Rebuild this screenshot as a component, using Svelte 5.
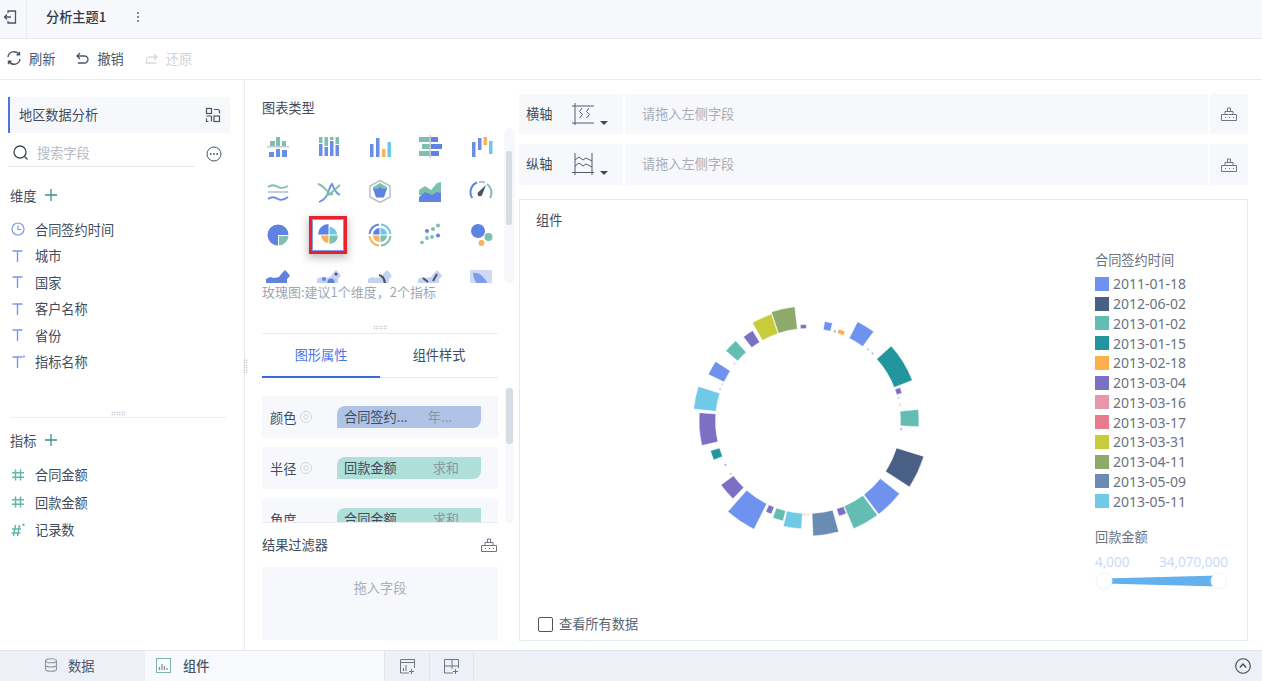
<script>
  const C = 808 - 688, CY = 120, R0 = 92.5;
  const pt = (a, r) => {
    const t = (a * Math.PI) / 180;
    return [(C + r * Math.sin(t)).toFixed(2), (CY - r * Math.cos(t)).toFixed(2)];
  };
  const arc = (a, b, R) => {
    const [x1, y1] = pt(a, R0), [x2, y2] = pt(b, R0), [x3, y3] = pt(b, R), [x4, y4] = pt(a, R);
    return `M${x1} ${y1}A${R0} ${R0} 0 0 1 ${x2} ${y2}L${x3} ${y3}A${R} ${R} 0 0 0 ${x4} ${y4}Z`;
  };
  const col = {
    blue: '#6f92ee', dark: '#4a5f85', teal: '#64bdb2', deep: '#23959e', orange: '#fbb04c', purple: '#7b70c4',
    pink: '#e797ac', rose: '#e87c8c', yellow: '#c8cb3a', olive: '#8daa6c', steel: '#6b8cb2', cyan: '#6ecae6'
  };
  const segs = [
    [-18.6, -6.6, 115, col.olive], [-29.5, -18.9, 113, col.yellow], [-37.5, -31.5, 106, col.purple],
    [-49.5, -42, 108, col.teal], [-65, -57.2, 110, col.blue], [-84, -72.5, 115, col.cyan],
    [-103, -85.6, 109, col.purple], [-112.5, -107, 102, col.deep], [-136, -126.3, 108, col.purple],
    [-153.5, -138.5, 121, col.blue], [-158.5, -155, 100, col.purple], [-166, -160, 103, col.teal],
    [-176.5, -166.8, 108, col.cyan], [164.5, 177.5, 115, col.steel], [157.5, 162, 100, col.purple],
    [143.6, 157, 117, col.teal], [128.5, 142.8, 117, col.blue], [107, 123, 121, col.dark],
    [84, 93, 111, col.teal], [48, 68.7, 112, col.deep], [26.5, 36.3, 111, col.blue],
    [18.5, 22.5, 97, col.orange], [9.5, 14, 101, col.blue], [-4.6, -1, 96.5, col.purple], [70, 73.5, 98, col.purple]
  ];
  const dots = [
    [-52, col.pink], [-67, col.yellow], [-70, col.pink], [-118, col.deep], [-124.4, col.olive], [-177.8, col.pink],
    [180, col.orange], [40, col.teal], [43.7, col.purple], [75.7, col.cyan], [80, col.orange], [95, col.purple], [16.7, col.dark]
  ];
  const chartSegs = segs.map(([a, b, r, c]) => ({ d: arc(a, b, r), c }));
  const chartDots = dots.map(([a, c]) => ({ d: arc(a - 0.7, a + 0.7, 94.5), c }));
  const legend = [
    ['2011-01-18', col.blue], ['2012-06-02', col.dark], ['2013-01-02', col.teal], ['2013-01-15', col.deep],
    ['2013-02-18', col.orange], ['2013-03-04', col.purple], ['2013-03-16', col.pink], ['2013-03-17', col.rose],
    ['2013-03-31', col.yellow], ['2013-04-11', col.olive], ['2013-05-09', col.steel], ['2013-05-11', col.cyan]
  ];
  const dims = [
    ['clock', '合同签约时间'], ['t', '城市'], ['t', '国家'], ['t', '客户名称'], ['t', '省份'], ['tc', '指标名称']
  ];
  const measures = [['h', '合同金额'], ['h', '回款金额'], ['hc', '记录数']];
  const mapPath = 'M0 11l4-2 4 1 5-1 3-4 3-3 3 3 2 3-3 3V24H0z';
</script>

<div class="app">
  <header class="top">
    <div class="back">
      <svg width="16" height="16" viewBox="0 0 16 16" fill="none" stroke="#4a5568" stroke-width="1.300"><path d="M6 4V2h7.500v12H6v-2M9 8H2.500M5 5.500 2.500 8 5 10.500"/></svg>
    </div>
    <div class="topic">分析主题1</div>
    <svg class="more" width="4" height="12" viewBox="0 0 4 12" fill="#5a6474"><circle cx="2" cy="2" r="1"/><circle cx="2" cy="6" r="1"/><circle cx="2" cy="10" r="1"/></svg>
  </header>

  <div class="tools">
    <span class="tool">
      <svg width="16" height="16" viewBox="0 0 16 16" fill="none" stroke="#4a5568" stroke-width="1.400"><path d="M2 7A6 6 0 0 1 13 4.500M14 9A6 6 0 0 1 3 11.500M13.500 1.800v3h-3M2.500 14.200v-3h3"/></svg>
      刷新
    </span>
    <span class="tool undo">
      <svg width="15" height="15" viewBox="0 0 15 15" fill="none" stroke="#4a5568" stroke-width="1.300"><path d="M5 2 2 5l3 3M2 5h7.500a3.500 3.500 0 0 1 0 7H3"/></svg>
      撤销
    </span>
    <span class="tool off">
      <svg width="15" height="15" viewBox="0 0 15 15" fill="none" stroke="#d5d9e0" stroke-width="1.300"><path d="m10 3 3 3-3 3M13 6H6a3.500 3.500 0 0 0-3.500 3.500V12h10"/></svg>
      还原
    </span>
  </div>

  <main class="main">
    <aside class="left">
      <div class="ds">
        <span>地区数据分析</span>
        <svg width="16" height="16" viewBox="0 0 16 16" fill="none" stroke="#4a5568" stroke-width="1.200"><rect x="1.500" y="1.500" width="5" height="5"/><rect x="9" y="9" width="5.500" height="5.500"/><path d="M1.500 9h5M6.500 9v5.500M1.500 11.500v3h2M9 2.500h3.500a2 2 0 0 1 2 2V6.500"/></svg>
      </div>
      <div class="searchrow">
        <div class="search">
          <svg width="17" height="17" viewBox="0 0 17 17" fill="none" stroke="#3d4a5c" stroke-width="1.300"><circle cx="8" cy="8" r="6"/><path d="m12.500 12.500 3 3"/></svg>
          <span>搜索字段</span>
        </div>
        <svg class="opts" width="16" height="16" viewBox="0 0 16 16" fill="none" stroke="#4a5568"><circle cx="8" cy="8" r="7"/><g fill="#4a5568" stroke="none"><circle cx="4.800" cy="8" r=".9"/><circle cx="8" cy="8" r=".9"/><circle cx="11.200" cy="8" r=".9"/></g></svg>
      </div>
      <div class="head">维度
        <svg width="12" height="12" viewBox="0 0 12 12" stroke="#3f8f88" stroke-width="1.300"><path d="M6 0v12M0 6h12"/></svg>
      </div>
      <ul class="fields">
        {#each dims as [kind, name]}
          <li>
            {#if kind === 'clock'}
              <svg width="14" height="14" viewBox="0 0 14 14" fill="none" stroke="#7b97e6" stroke-width="1.200"><circle cx="7" cy="7" r="6"/><path d="M7 3.500V7.500H10"/></svg>
            {:else}
              <svg width="14" height="14" viewBox="0 0 14 14" fill="none" stroke="#7b97e6" stroke-width="1.400"><path d="M1.500 2h10M6.500 2v11"/>{#if kind === 'tc'}<circle cx="13" cy="1.500" r="1" fill="#7b97e6" stroke="none"/>{/if}</svg>
            {/if}
            <span>{name}</span>
          </li>
        {/each}
      </ul>
      <div class="grip lgrip"></div>
      <div class="rule"></div>
      <div class="head mhead">指标
        <svg width="12" height="12" viewBox="0 0 12 12" stroke="#3f8f88" stroke-width="1.300"><path d="M6 0v12M0 6h12"/></svg>
      </div>
      <ul class="fields mfields">
        {#each measures as [kind, name]}
          <li>
            <svg width="14" height="14" viewBox="0 0 14 14" fill="none" stroke="#63b8ac" stroke-width="1.500">
              {#if kind === 'h'}
                <path d="M4.500 1.500v11M9.500 1.500v11M1 4.700h12M1 9.300h12"/>
              {:else}
                <path d="M4.500 2 2.500 13M8.500 2l-2 11M1 6h9M.5 10h9"/><circle cx="12.500" cy="1.800" r="1.200" fill="#63b8ac" stroke="none"/>
              {/if}
            </svg>
            <span>{name}</span>
          </li>
        {/each}
      </ul>
      <div class="vgrip"></div>
    </aside>

    <section class="mid">
      <div class="title">图表类型</div>
      <div class="types">
        <div class="grid">
          <div class="ic"><svg viewBox="0 0 24 24"><path fill="#7cc0b0" d="M4 7h5v5H4zM10 3h4v9h-4zM16 7h4v5h-4z"/><path fill="#c6ccd8" d="M1 12h22v1.500H1z"/><path fill="#6a8ee8" d="M3 18h5v5H3zM10 15h4v8h-4zM16 16h5v7h-5z"/></svg></div>
          <div class="ic"><svg viewBox="0 0 24 24"><path fill="#7cc0b0" d="M2 3h3.500v6H2zM7.500 3H11v9H7.500zM13 3h3.500v3H13zM18.500 3H22v7h-3.500z"/><path fill="#6a8ee8" d="M2 10h3.500v12H2zM7.500 13H11v9H7.500zM13 7h3.500v15H13zM18.500 11H22v11h-3.500z"/></svg></div>
          <div class="ic"><svg viewBox="0 0 24 24"><path fill="#6a8ee8" d="M2 10h3.500v13H2zM8 4h3.500v19H8z"/><path fill="#f5b45c" d="M14 15h3.500v8H14z"/><path fill="#6cc7e8" d="M19.500 8H23v15h-3.500z"/></svg></div>
          <div class="ic"><svg viewBox="0 0 24 24"><path fill="#7cc0b0" d="M1 3h11v5H1zM1 17h11v5H1zM4 10h8v5H4z"/><path fill="#c6ccd8" d="M11.500 1H13v23h-1.500z"/><path fill="#5f82e3" d="M13 3h7v5h-7zM13 10h11v5H13zM13 17h8v5h-8z"/></svg></div>
          <div class="ic"><svg viewBox="0 0 24 24"><path fill="#6a8ee8" d="M3 8h3.500v15H3zM9 4h3.500v12H9z"/><path fill="#f5b45c" d="M14.500 3H18v8h-3.500z"/><path fill="#6cc7e8" d="M20 7h3.500v13H20z"/></svg></div>

          <div class="ic"><svg viewBox="0 0 24 24" fill="none" stroke-width="1.800"><path stroke="#7cc0b0" d="M2 8c4-3 7-2 10 0s6 1 10-1"/><path stroke="#c6ccd8" stroke-width="2" d="M2 13h20"/><path stroke="#6a8ee8" d="M2 20c4-3 7-2 10 0s6 1 10-2"/></svg></div>
          <div class="ic"><svg viewBox="0 0 24 24" fill="none" stroke-width="1.800"><path stroke="#6a8ee8" d="M2 23c6-2 8-6 10-12 1-3 2-5 3-6 2 4 3 9 8 11"/><path stroke="#7cc0b0" d="M1 5c5 1 9 7 12 10l10-9M9 16l7-1"/></svg></div>
          <div class="ic"><svg viewBox="0 0 24 24"><path fill="none" stroke="#b9bfcb" stroke-width="1.500" d="M12 1.500 22 7v11l-10 5.500L2 18V7z"/><path fill="#7cc0b0" d="M5 8l7-4 7 4v3H5z"/><path fill="#5f82e3" d="M5 9.500l4 .5 3-2 3 2 4-.5-3 9H8z"/></svg></div>
          <div class="ic"><svg viewBox="0 0 24 24"><path fill="#7cc0b0" d="M1 11l6-4 6 4 6-7 4-1v13H1z"/><path fill="#5f82e3" d="M1 18l6-5 7 3 5-3 4 1v9H1z"/></svg></div>
          <div class="ic"><svg viewBox="0 0 24 24" fill="none" stroke-width="2"><path stroke="#5f82e3" d="M3.200 19A10.500 10.500 0 0 1 8 3.500"/><path stroke="#b9bfcb" d="M10 3a10 10 0 0 1 6 .5"/><path stroke="#7cc0b0" d="M18 5a10.500 10.500 0 0 1 3 14"/><path fill="#4a5568" stroke="none" d="M17 6 13.500 15a2.500 2.500 0 1 1-3.500-2.500z"/></svg></div>

          <div class="ic"><svg viewBox="0 0 24 24"><path fill="#5f82e3" d="M12 1.500A10.500 10.500 0 1 1 1.500 12 10.500 10.500 0 0 1 12 1.500z M12 12v10.500A10.500 10.500 0 0 0 22.500 12z" fill-rule="evenodd"/><path fill="#7cc0b0" d="M13 13h9.500A10.500 10.500 0 0 1 13 22.500z"/></svg></div>
          <div class="ic sel"><svg viewBox="0 0 24 24"><path fill="#5f82e3" d="M11.500 11.500H1A10.500 10.500 0 0 1 11.500 1z"/><path fill="#6cc7e8" d="M12.500 11.500V4a7.500 7.500 0 0 1 7.500 7.500z"/><path fill="#7cc0b0" d="M12.500 12.500h8.500a8.500 8.500 0 0 1-8.500 8.500z"/><path fill="#f5b45c" d="M11.500 12.500v7.500A7.500 7.500 0 0 1 4 12.500z"/></svg></div>
          <div class="ic"><svg viewBox="0 0 24 24" fill="none"><path fill="#5f82e3" d="M11.500 11.500H5A6.500 6.500 0 0 1 11.500 5z"/><path fill="#6cc7e8" d="M12.500 11.500V5A6.500 6.500 0 0 1 19 11.500z"/><path fill="#7cc0b0" d="M12.500 12.500H19A6.500 6.500 0 0 1 12.500 19z"/><path fill="#f5b45c" d="M11.500 12.500V19A6.500 6.500 0 0 1 5 12.500z"/><g stroke-width="2"><path stroke="#5f82e3" d="M1.500 11A10.500 10.500 0 0 1 11 1.500"/><path stroke="#6cc7e8" d="M13 1.500a10.500 10.500 0 0 1 9.500 9.500"/><path stroke="#7cc0b0" d="M22.500 13a10.500 10.500 0 0 1-9.500 9.500"/><path stroke="#f5b45c" d="M11 22.500A10.500 10.500 0 0 1 1.500 13"/></g></svg></div>
          <div class="ic"><svg viewBox="0 0 24 24"><circle cx="4" cy="19.500" r="1.800" fill="#7cc0b0"/><circle cx="9" cy="15" r="1.900" fill="#7cc0b0"/><circle cx="14" cy="14" r="1.900" fill="#7cc0b0"/><circle cx="9" cy="8" r="2" fill="#5f82e3"/><circle cx="15" cy="6" r="2" fill="#7cc0b0"/><circle cx="20" cy="2.500" r="2" fill="#7cc0b0"/><circle cx="20" cy="12.500" r="2" fill="#5f82e3"/></svg></div>
          <div class="ic"><svg viewBox="0 0 24 24"><circle cx="9" cy="8" r="7" fill="#5f82e3"/><circle cx="19.500" cy="14" r="4" fill="#7cc0b0"/><circle cx="12.500" cy="20" r="3" fill="#f5b45c"/></svg></div>

          <div class="ic"><svg viewBox="0 0 24 24"><path fill="#5f82e3" d={mapPath}/></svg></div>
          <div class="ic"><svg viewBox="0 0 24 24"><path fill="#c5d2f4" d={mapPath}/><circle cx="7" cy="11" r="2" fill="#5f82e3"/><circle cx="14" cy="14" r="3.500" fill="#5f82e3"/><circle cx="19" cy="6" r="1.500" fill="#4a5568"/></svg></div>
          <div class="ic"><svg viewBox="0 0 24 24"><path fill="#c5d2f4" d={mapPath}/><path fill="none" stroke="#4a5568" stroke-width="2.200" d="M11 7c4 1 6 5 6 10"/></svg></div>
          <div class="ic"><svg viewBox="0 0 24 24"><path fill="#c5d2f4" d={mapPath}/><path fill="none" stroke="#4a5568" stroke-width="2" d="M5 10l5 4M15 13l4-7"/></svg></div>
          <div class="ic"><svg viewBox="0 0 24 24"><rect x="1" y="2" width="22" height="22" fill="#cfdaf6"/><path fill="#7f9cea" d="M4 5c6-1 10 3 14 9v6h-4C9 19 4 11 4 5z"/></svg></div>
        </div>
        <div class="bar"><i class="thumb t1"></i></div>
      </div>
      <div class="hint">玫瑰图:建议1个维度，2个指标</div>
      <div class="sep"><div class="grip"></div></div>
      <div class="tabs">
        <div class="tab active">图形属性</div>
        <div class="tab other">组件样式</div>
      </div>
      <div class="props">
        <div class="plist">
          <div class="prow"><span class="pl">颜色</span><svg class="gear" width="12" height="12" viewBox="0 0 12 12" fill="none" stroke="#d3d6dd"><circle cx="6" cy="6" r="5.500"/><circle cx="6" cy="6" r="2.200"/></svg>
            <div class="pill blue"><span>合同签约...</span><em class="e1">年...</em></div></div>
          <div class="prow"><span class="pl">半径</span><svg class="gear" width="12" height="12" viewBox="0 0 12 12" fill="none" stroke="#d3d6dd"><circle cx="6" cy="6" r="5.500"/><circle cx="6" cy="6" r="2.200"/></svg>
            <div class="pill green"><span>回款金额</span><em>求和</em></div></div>
          <div class="prow"><span class="pl">角度</span>
            <div class="pill green nogear"><span>合同金额</span><em>求和</em></div></div>
        </div>
        <div class="bar pbar"><i class="thumb t2"></i></div>
      </div>
      <div class="ftitle">
        <span>结果过滤器</span>
        <svg width="18" height="16" viewBox="0 0 18 16" fill="none" stroke="#6d7684"><path d="M1.500 8.500h15v6h-15zM5 8.500v-3h8v3M7.500 5.500V2h3v3.500M5 11.500h1M9 11.500h1M13 11.500h1"/></svg>
      </div>
      <div class="fbox">拖入字段</div>
    </section>

    <section class="right">
      <div class="axis">
        <div class="cell name"><span>横轴</span>
          <svg width="24" height="24" viewBox="0 0 24 24" fill="none" stroke="#4f5c6e"><path d="M0 22h22M0 5h22M3 2v22"/><path d="M10 7 7.500 10.500l3 3-3 3.500M17 7l-2.500 3.500 3 3-3 3.500"/></svg>
          <i class="caret"></i>
        </div>
        <div class="cell drop">请拖入左侧字段</div>
        <div class="cell tool2"><svg width="18" height="16" viewBox="0 0 18 16" fill="none" stroke="#6d7684"><path d="M1.500 8.500h15v6h-15zM5 8.500v-3h8v3M7.500 5.500V2h3v3.500M5 11.500h1M9 11.500h1M13 11.500h1"/></svg></div>
      </div>
      <div class="axis a2">
        <div class="cell name"><span>纵轴</span>
          <svg width="24" height="24" viewBox="0 0 24 24" fill="none" stroke="#4f5c6e"><path d="M3 1v22M0 20.500h22M20 1v22"/><path d="m3 8 4-3 4 3 3-2 6 3M3 14l4-3 4 3 3-2 6 3"/></svg>
          <i class="caret"></i>
        </div>
        <div class="cell drop">请拖入左侧字段</div>
        <div class="cell tool2"><svg width="18" height="16" viewBox="0 0 18 16" fill="none" stroke="#6d7684"><path d="M1.500 8.500h15v6h-15zM5 8.500v-3h8v3M7.500 5.500V2h3v3.500M5 11.500h1M9 11.500h1M13 11.500h1"/></svg></div>
      </div>
      <div class="card">
        <div class="ctitle">组件</div>
        <div class="cbody">
          <svg class="ring" width="240" height="240" viewBox="0 0 240 240">
            {#each chartDots as s}<path d={s.d} fill={s.c} opacity=".45"/>{/each}
            {#each chartSegs as s}<path d={s.d} fill={s.c} stroke="#fff" stroke-width=".5"/>{/each}
          </svg>
          <div class="legend">
            <div class="ltitle">合同签约时间</div>
            <div class="litems">
              {#each legend as [t, c]}
                <div class="li"><i style="background:{c}"></i>{t}</div>
              {/each}
            </div>
            <div class="ltitle l2">回款金额</div>
            <div class="range"><span>4,000</span><span>34,070,000</span></div>
            <svg class="slider" width="132" height="18" viewBox="0 0 132 18">
              <path d="M9 6.500 124 3.500v11L9 11.500z" fill="#63b0ee"/>
              <circle cx="9" cy="9" r="8" fill="#fff" stroke="#f0f3f8"/>
              <circle cx="124" cy="9" r="8" fill="#fff" stroke="#f0f3f8"/>
            </svg>
          </div>
        </div>
        <div class="cfoot"><i class="check"></i><span>查看所有数据</span></div>
      </div>
    </section>
  </main>

  <footer class="bottom">
    <div class="btab">
      <svg width="14" height="14" viewBox="0 0 14 14" fill="none" stroke="#8f97a5" stroke-width="1.100"><ellipse cx="7" cy="2.800" rx="5.500" ry="2"/><path d="M1.500 2.800v8.400c0 1.100 2.500 2 5.500 2s5.500-.9 5.500-2V2.800M1.500 7c0 1.100 2.500 2 5.500 2s5.500-.9 5.500-2"/></svg>
      <span>数据</span>
    </div>
    <div class="btab on">
      <svg width="15" height="15" viewBox="0 0 15 15" fill="none"><rect x=".5" y=".5" width="14" height="14" stroke="#7eb4ac"/><path d="M3.500 12V9M6 12V6M8.500 12V8M11 12v-2" stroke="#7c8ea0" stroke-width="1.200"/></svg>
      <span>组件</span>
    </div>
    <div class="bbtn">
      <svg width="15" height="15" viewBox="0 0 15 15" fill="none" stroke="#6d7684"><path d="M9 14H.5V.5h14V9M.5 3.500h14M3.500 12V9M6 12V6"/><path d="M11.500 10v5M9 12.500h5"/></svg>
    </div>
    <div class="bbtn">
      <svg width="15" height="15" viewBox="0 0 15 15" fill="none" stroke="#6d7684"><path d="M9 14H.5V.5h14V9M8 .5V7H.5M8 7v3M8 7h6.500"/><path d="M11.500 10v5M9 12.500h5"/></svg>
    </div>
    <svg class="up" width="16" height="16" viewBox="0 0 16 16" fill="none" stroke="#3d4a5c" stroke-width="1.100"><circle cx="8" cy="8" r="7.300"/><path d="m4.800 9.500 3.200-3.500 3.200 3.500" stroke-width="1.300"/></svg>
  </footer>
</div>

<style>
  :global(body) { margin: 0; background: #fff; }
  .app {
    width: 1262px; height: 681px; display: flex; flex-direction: column; overflow: hidden;
    font-family: "Noto Sans CJK SC", "Noto Sans", sans-serif; font-size: 13.200px; color: #414c5e;
  }
  ul { list-style: none; margin: 0; padding: 0; }
  em { font-style: normal; }
  svg { display: block; flex: none; }

  .top { height: 39px; box-sizing: border-box; flex: none; display: flex; align-items: center; background: #f7f8fc; border-bottom: 1px solid #e9ebf1; }
  .back { width: 27px; height: 38px; box-sizing: border-box; display: flex; align-items: center; padding: 0 0 5px 2px; border-right: 1px solid #e9ebf1; }
  .topic { margin-left: 19px; font-weight: 500; color: #2f3948; width: 90px; padding-bottom: 5px; line-height: 20px; }
  .more { margin-bottom: 5px; }

  .tools { height: 41px; box-sizing: border-box; flex: none; display: flex; align-items: center; padding: 0 0 2px 6px; border-bottom: 1px solid #e9ebf1; }
  .tool { display: flex; align-items: center; gap: 7px; color: #4a5568; }
  .undo { margin-left: 20px; }
  .off { margin-left: 20px; color: #d0d4db; }

  .main { flex: 1; min-height: 0; display: flex; }

  .left { width: 245px; box-sizing: border-box; flex: none; border-right: 1px solid #e6e9f0; padding: 17px 0 0 8px; position: relative; }
  .ds { width: 222px; height: 36px; box-sizing: border-box; background: #f7f8fc; border-left: 2px solid #4e74e0; display: flex; align-items: center; justify-content: space-between; padding: 0 9px 2px 9px; }
  .ds svg { margin-top: 1px; }
  .searchrow { display: flex; align-items: center; margin-top: 7px; }
  .search { width: 186px; height: 27px; box-sizing: border-box; border-bottom: 1px solid #e3e5ea; display: flex; align-items: center; gap: 8px; padding: 0 0 1px 4px; color: #b4bac4; }
  .opts { margin-left: 12px; }
  .head { height: 20px; margin: 18px 0 0 2px; display: flex; align-items: center; gap: 9px; color: #414c5e; }
  .fields { margin: 11px 0 0 2px; }
  .fields li { height: 26.500px; display: flex; align-items: center; gap: 10px; color: #414c5e; padding-left: 1px; }
  .fields li svg { width: 14px; }
  .grip { width: 14px; height: 5px; background: radial-gradient(circle, #b8bdc7 0.7px, transparent 0.9px) 0 0 / 2.500px 2.500px; }
  .lgrip { margin: 36px 0 0 103px; }
  .rule { width: 216px; height: 1px; background: #eceef3; margin: 1px 0 0 2px; }
  .mhead { margin-top: 12px; }
  .mfields { margin-top: 11px; }
  .mfields li { height: 27.500px; }
  .vgrip { position: absolute; right: -4px; top: 279px; width: 5px; height: 14px; background: radial-gradient(circle, #b8bdc7 0.7px, transparent 0.9px) 0 0 / 2.500px 2.500px; }

  .mid { width: 274px; box-sizing: border-box; flex: none; padding: 18px 4px 0 17px; display: flex; flex-direction: column; }
  .title { height: 20px; line-height: 20px; }
  .types { height: 155px; margin-top: 10px; display: flex; flex: none; justify-content: space-between; overflow: hidden; }
  .grid { display: grid; grid-template-columns: repeat(5, 32px); grid-auto-rows: 32px; column-gap: 18.750px; row-gap: 12.500px; padding-top: 2px; }
  .ic { display: flex; align-items: center; justify-content: center; box-sizing: border-box; height: 32px; }
  .ic svg { width: 24px; height: 24px; }
  .sel { border: 1px solid #7f9cea; outline: 3px solid #e8212b; box-shadow: 0 3px 8px 4px rgba(0,0,0,.25); background: #fff; margin: 0 1px 0 -1px; padding-left: 2px; }
  .bar { width: 11px; background: #f7f8fc; border-radius: 6px; flex: none; }
  .thumb { display: block; width: 6px; margin-left: 2px; background: #d8dce4; border-radius: 3px; }
  .t1 { height: 74px; margin-top: 23px; }
  .hint { height: 18px; line-height: 18px; font-size: 13px; color: #a0a7b3; }
  .sep { height: 33px; width: 236px; flex: none; box-sizing: border-box; border-bottom: 1px solid #e9ebf1; display: flex; align-items: flex-end; justify-content: center; padding-bottom: 3px; }
  .tabs { width: 236px; height: 44px; flex: none; box-sizing: border-box; display: flex; border-bottom: 1px solid #e6e9f0; }
  .tab { flex: 1; display: flex; align-items: center; justify-content: center; margin-bottom: -1px; box-sizing: border-box; padding-bottom: 2px; }
  .active { color: #4a78e6; border-bottom: 2px solid #3a69de; }
  .other { padding-bottom: 4px; }
  .props { height: 145px; flex: none; display: flex; gap: 7px; overflow: hidden; box-sizing: border-box; position: relative; }
  .props::after { content: ""; position: absolute; left: 0; bottom: 0; width: 236px; height: 1px; background: #e9ebf1; }
  .plist { width: 236px; padding-top: 18px; flex: none; }
  .prow { height: 42px; background: #f7f8fc; margin-bottom: 9px; display: flex; align-items: center; padding-left: 8px; box-sizing: border-box; }
  .pl { width: 30px; }
  .gear { width: 12px; }
  .pill { width: 144px; height: 22px; margin-left: 25px; display: flex; align-items: center; justify-content: space-between; padding: 0 22px 2px 7px; box-sizing: border-box; border-radius: 8px 0 8px 0; }
  .nogear { margin-left: 37px; }
  .pill em { color: #8d95a2; }
  .pill .e1 { margin-right: 7px; }
  .blue { background: #aec3e6; }
  .green { background: #aedfd8; }
  .pbar { width: 9px; margin-top: 10px; }
  .t2 { height: 56px; margin-left: 1px; width: 7px; }
  .ftitle { width: 236px; height: 20px; margin-top: 12px; display: flex; align-items: center; justify-content: space-between; }
  .ftitle span { margin-top: -2px; }
  .fbox { width: 236px; height: 73px; margin-top: 12px; background: #f7f8fc; color: #a8aeb9; text-align: center; padding-top: 11px; box-sizing: border-box; line-height: 20px; }

  .right { flex: 1; min-width: 0; padding: 14px 14px 9px 0; box-sizing: border-box; display: flex; flex-direction: column; }
  .axis { display: grid; grid-template-columns: 104px 1fr 38px; gap: 2px; height: 40px; flex: none; }
  .a2 { margin-top: 10px; height: 41px; }
  .cell { background: #f7f8fc; display: flex; align-items: center; padding-bottom: 2px; box-sizing: border-box; }
  .name { padding-left: 7px; gap: 20px; position: relative; color: #414c5e; }
  .caret { position: absolute; left: 81px; top: 27px; border: 4px solid transparent; border-top: 4px solid #3d4a5c; border-bottom: 0; }
  .drop { padding-left: 17px; color: #a8aeb9; }
  .tool2 { justify-content: center; padding-bottom: 0; }
  .card { margin-top: 14px; flex: 1; border: 1px solid #e6e9f0; display: flex; flex-direction: column; min-height: 0; }
  .ctitle { height: 20px; line-height: 20px; margin: 10px 0 0 16px; }
  .cbody { flex: 1; display: flex; min-height: 0; }
  .ring { margin: 71px 0 0 168px; }
  .legend { margin: 20px 0 0 167px; width: 134px; }
  .ltitle { height: 20px; line-height: 20px; color: #6b7280; }
  .litems { margin-top: 4px; }
  .li { height: 19.750px; display: flex; align-items: center; gap: 4px; color: #6b7280; font-family: "Noto Sans", sans-serif; font-size: 14px; }
  .li i { width: 14px; height: 14px; flex: none; }
  .l2 { margin-top: 16px; }
  .range { height: 20px; margin-top: 5px; width: 133px; display: flex; justify-content: space-between; align-items: center; color: #c7dbf8; font-family: "Noto Sans", sans-serif; font-size: 13.500px; }
  .cfoot { height: 16px; margin: 0 0 8px 18px; display: flex; align-items: center; gap: 6px; color: #5a6474; }
  .cfoot span { margin-top: -2px; }
  .check { width: 15px; height: 15px; box-sizing: border-box; border: 1.500px solid #4a5568; border-radius: 2px; }

  .bottom { height: 30px; flex: none; background: #edf0f6; border-top: 1px solid #e4e7ee; display: flex; align-items: center; }
  .btab { width: 145px; height: 30px; display: flex; align-items: center; padding: 0 0 2px 44px; gap: 10px; box-sizing: border-box; color: #4a5568; }
  .on { width: 239px; background: #f9fafd; padding-left: 11px; gap: 12px; font-weight: 500; }
  .bbtn { width: 45px; height: 30px; display: flex; align-items: center; justify-content: center; border-left: 1px solid #e0e3ea; box-sizing: border-box; }
  .bbtn:nth-of-type(4) { border-right: 1px solid #e0e3ea; }
  .up { margin-left: auto; margin-right: 11px; }
</style>
